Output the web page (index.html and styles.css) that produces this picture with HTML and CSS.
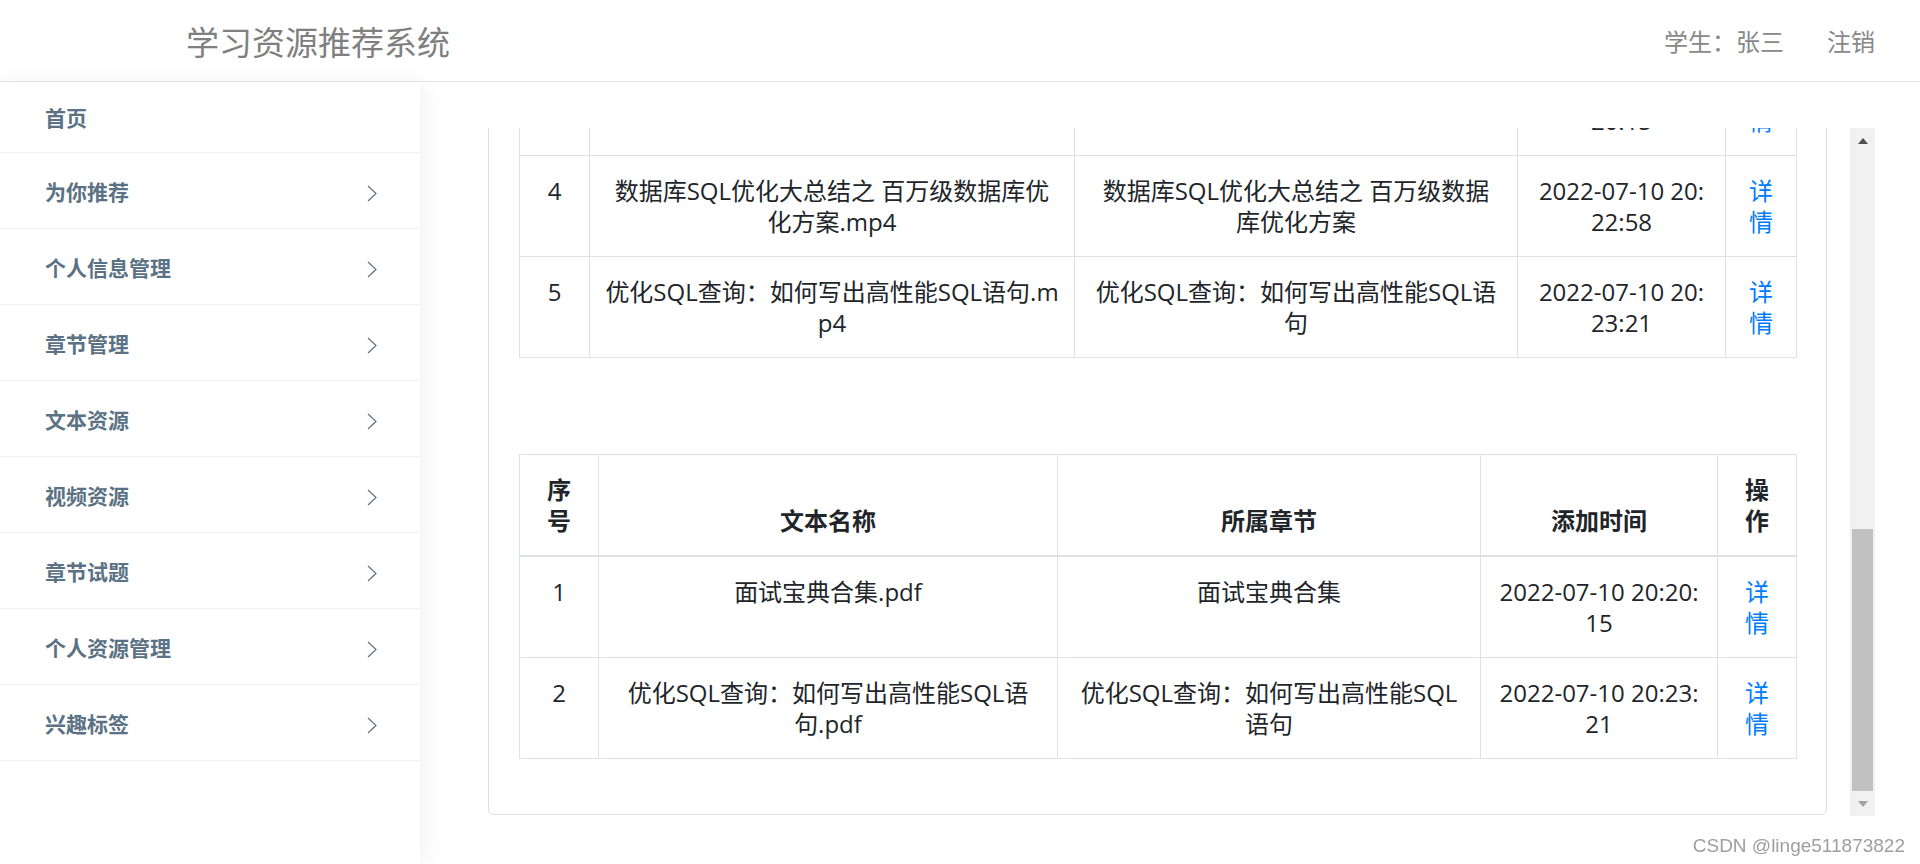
FILE: index.html
```html
<!DOCTYPE html>
<html lang="zh-CN">
<head>
    <meta charset="UTF-8">
    <meta name="viewport" content="width=device-width, initial-scale=1.0">
    <link rel="stylesheet" href="styles.css">
    <title>学习资源推荐系统</title>
</head>
<body>
    <header class="topbar">
        <div class="brand">学习资源推荐系统</div>
        <div class="user">
            <span>学生：张三</span>
            <a href="#">注销</a>
        </div>
    </header>
    <div class="layout">
        <aside class="sidebar">
            <ul class="menu">
                <li class="home"><a href="#">首页</a></li>
                <li><a href="#">为你推荐<svg class="chevron" width="10" height="17" viewBox="0 0 10 17"><polyline points="1,1 9,8.5 1,16" /></svg></a></li>
                <li><a href="#">个人信息管理<svg class="chevron" width="10" height="17" viewBox="0 0 10 17"><polyline points="1,1 9,8.5 1,16" /></svg></a></li>
                <li><a href="#">章节管理<svg class="chevron" width="10" height="17" viewBox="0 0 10 17"><polyline points="1,1 9,8.5 1,16" /></svg></a></li>
                <li><a href="#">文本资源<svg class="chevron" width="10" height="17" viewBox="0 0 10 17"><polyline points="1,1 9,8.5 1,16" /></svg></a></li>
                <li><a href="#">视频资源<svg class="chevron" width="10" height="17" viewBox="0 0 10 17"><polyline points="1,1 9,8.5 1,16" /></svg></a></li>
                <li><a href="#">章节试题<svg class="chevron" width="10" height="17" viewBox="0 0 10 17"><polyline points="1,1 9,8.5 1,16" /></svg></a></li>
                <li><a href="#">个人资源管理<svg class="chevron" width="10" height="17" viewBox="0 0 10 17"><polyline points="1,1 9,8.5 1,16" /></svg></a></li>
                <li><a href="#">兴趣标签<svg class="chevron" width="10" height="17" viewBox="0 0 10 17"><polyline points="1,1 9,8.5 1,16" /></svg></a></li>
            </ul>
        </aside>
        <main class="content">
            <div class="scroll-area">
                <div class="viewport">
                    <div class="card">
                        <table class="data-table video-table">
                            <colgroup><col><col><col><col><col></colgroup>
                            <thead>
                                <tr><th>序号</th><th>视频名称</th><th>所属章节</th><th>添加时间</th><th>操作</th></tr>
                            </thead>
                            <tbody>
                                <tr><td>1</td><td>MySQL基础教程.mp4</td><td>MySQL基础教程</td><td>2022-07-10 20:18:11</td><td><a href="#">详情</a></td></tr>
                                <tr><td>2</td><td>SQL索引原理详解.mp4</td><td>SQL索引原理详解</td><td>2022-07-10 20:18:47</td><td><a href="#">详情</a></td></tr>
                                <tr><td>3</td><td>面试宝典合集.mp4</td><td>面试宝典合集</td><td>2022-07-10 20:20:15</td><td><a href="#">详情</a></td></tr>
                                <tr><td>4</td><td>数据库SQL优化大总结之 百万级数据库优化方案.mp4</td><td>数据库SQL优化大总结之 百万级数据库优化方案</td><td>2022-07-10 20:22:58</td><td><a href="#">详情</a></td></tr>
                                <tr><td>5</td><td>优化SQL查询：如何写出高性能SQL语句.mp4</td><td>优化SQL查询：如何写出高性能SQL语句</td><td>2022-07-10 20:23:21</td><td><a href="#">详情</a></td></tr>
                            </tbody>
                        </table>

                        <table class="data-table text-table">
                            <colgroup><col><col><col><col><col></colgroup>
                            <thead>
                                <tr><th>序号</th><th>文本名称</th><th>所属章节</th><th>添加时间</th><th>操作</th></tr>
                            </thead>
                            <tbody>
                                <tr><td>1</td><td>面试宝典合集.pdf</td><td>面试宝典合集</td><td>2022-07-10 20:20:15</td><td><a href="#">详情</a></td></tr>
                                <tr><td>2</td><td>优化SQL查询：如何写出高性能SQL语句.pdf</td><td>优化SQL查询：如何写出高性能SQL语句</td><td>2022-07-10 20:23:21</td><td><a href="#">详情</a></td></tr>
                            </tbody>
                        </table>
                    </div>
                </div>
                <div class="scrollbar">
                    <span class="sb-btn sb-up"></span>
                    <div class="sb-track"><div class="sb-thumb"></div></div>
                    <span class="sb-btn sb-down"></span>
                </div>
            </div>
        </main>
    </div>
    <div class="watermark">CSDN @linge511873822</div>
</body>
</html>
```

FILE: styles.css
```css
* {
    margin: 0;
    padding: 0;
    box-sizing: border-box;
}
body {
    font-family: "Open Sans", "Noto Sans CJK SC", sans-serif;
    color: #212529;
    background-color: #fff;
    height: 864px;
    overflow: hidden;
}

/* top bar */
.topbar {
    display: flex;
    justify-content: space-between;
    align-items: center;
    height: 82px;
    padding: 0 45px 0 186px;
    border-bottom: 1px solid #e6e6e6;
}
.brand {
    font-size: 33px;
    color: #7f7f7f;
}
.user {
    display: flex;
    gap: 43px;
    font-size: 24px;
    color: #888;
}
.user a {
    color: #888;
    text-decoration: none;
}

/* layout */
.layout {
    display: flex;
    height: 782px;
}
.sidebar {
    width: 420px;
    flex-shrink: 0;
    background-color: #fff;
    box-shadow: 4px 0 22px rgba(0, 0, 0, 0.06);
    position: relative;
    z-index: 1;
}
.menu {
    list-style: none;
}
.menu li {
    border-bottom: 1px solid #f1f1f1;
}
.menu a {
    display: flex;
    justify-content: space-between;
    align-items: center;
    height: 75px;
    padding: 0 43px 0 45px;
    font-size: 21px;
    font-weight: bold;
    color: #5b7284;
    text-decoration: none;
}
.menu .home a {
    height: 70px;
}
.chevron {
    margin-top: 6px;
}
.chevron polyline {
    fill: none;
    stroke: #5b7284;
    stroke-width: 1.2;
}

/* content */
.content {
    flex: 1;
    min-width: 0;
    padding: 46px 45px 48px 68px;
}
.scroll-area {
    display: flex;
    gap: 23px;
    height: 100%;
}
.viewport {
    flex: 1;
    min-width: 0;
    display: flex;
    flex-direction: column-reverse;
    overflow: hidden;
}

/* scrollbar, parked at the bottom */
.scrollbar {
    width: 25px;
    flex-shrink: 0;
    display: flex;
    flex-direction: column;
    background-color: #f1f1f1;
}
.sb-btn {
    height: 25px;
    display: flex;
    align-items: center;
    justify-content: center;
}
.sb-up::before {
    content: "";
    border-left: 5.5px solid transparent;
    border-right: 5.5px solid transparent;
    border-bottom: 6px solid #505050;
}
.sb-down::before {
    content: "";
    border-left: 5.5px solid transparent;
    border-right: 5.5px solid transparent;
    border-top: 6px solid #a3a3a3;
}
.sb-track {
    flex: 1;
    display: flex;
    flex-direction: column;
    justify-content: flex-end;
    padding: 0 2px;
}
.sb-thumb {
    height: 262px;
    background-color: #c1c1c1;
}

.card {
    flex-shrink: 0;
    border: 1px solid #dfdfdf;
    border-radius: 5px;
    padding: 30px;
    margin-bottom: 1px;
}

/* tables */
.data-table {
    width: 100%;
    border-collapse: collapse;
    table-layout: fixed;
    margin-bottom: 96px;
    font-size: 24px;
    line-height: 31px;
}
.data-table:last-child {
    margin-bottom: 25px;
}
.data-table th,
.data-table td {
    border: 1px solid #dee2e6;
    padding: 19px 16px;
    text-align: center;
    word-break: break-all;
}
.data-table th {
    vertical-align: bottom;
    border-bottom-width: 2px;
    font-weight: bold;
}
.data-table td {
    vertical-align: top;
}
.data-table a {
    color: #007bff;
    text-decoration: none;
}
.video-table td:nth-child(2) {
    padding-left: 13px;
    padding-right: 13px;
}
.video-table col:nth-child(1) { width: 70px; }
.video-table col:nth-child(2) { width: 485px; }
.video-table col:nth-child(3) { width: 443px; }
.video-table col:nth-child(4) { width: 208px; }
.video-table col:nth-child(5) { width: 71px; }
.text-table col:nth-child(1) { width: 79px; }
.text-table col:nth-child(2) { width: 459px; }
.text-table col:nth-child(3) { width: 423px; }
.text-table col:nth-child(4) { width: 237px; }
.text-table col:nth-child(5) { width: 79px; }

.watermark {
    position: fixed;
    right: 15px;
    bottom: 7px;
    font-family: "Liberation Sans", Arial, sans-serif;
    font-size: 19px;
    color: #9e9e9e;
    text-shadow: 0 0 2px #fff;
}
```
